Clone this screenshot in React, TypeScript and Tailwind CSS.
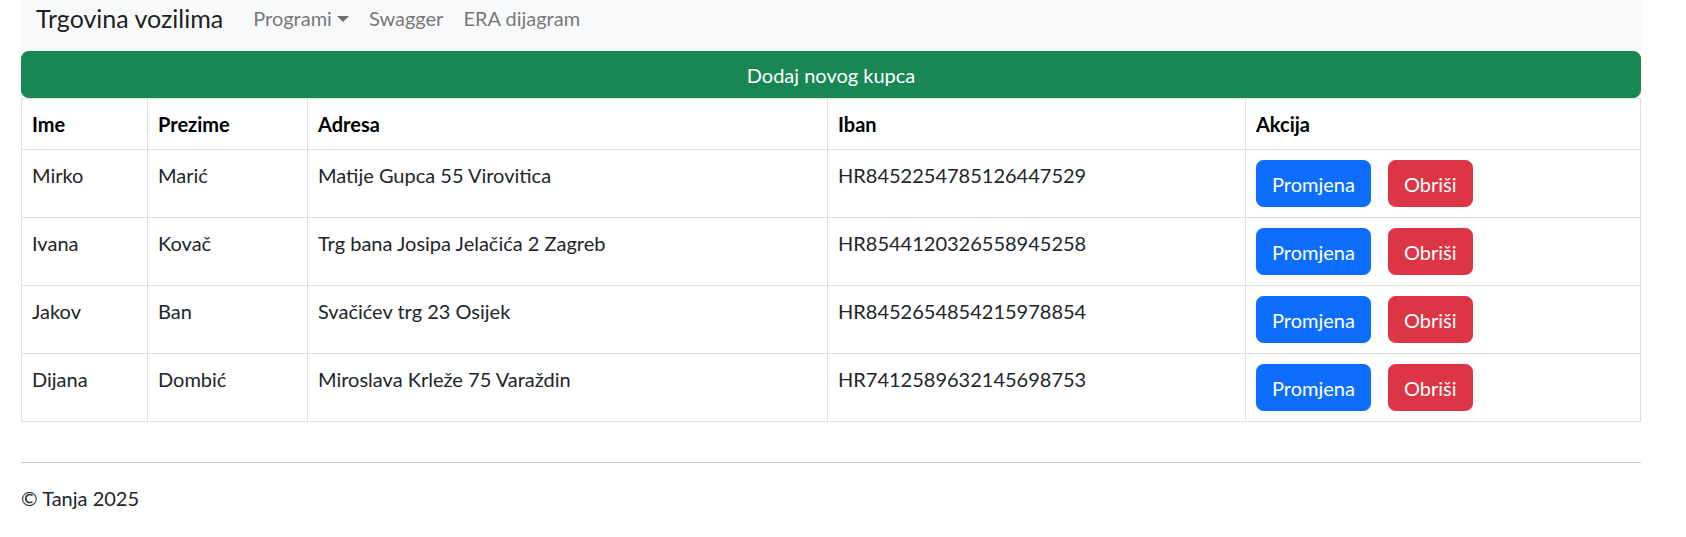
import React from "react";

const rows = [
  { ime: "Mirko", prezime: "Marić", adresa: "Matije Gupca 55 Virovitica", iban: "HR8452254785126447529" },
  { ime: "Ivana", prezime: "Kovač", adresa: "Trg bana Josipa Jelačića 2 Zagreb", iban: "HR8544120326558945258" },
  { ime: "Jakov", prezime: "Ban", adresa: "Svačićev trg 23 Osijek", iban: "HR8452654854215978854" },
  { ime: "Dijana", prezime: "Dombić", adresa: "Miroslava Krleže 75 Varaždin", iban: "HR7412589632145698753" },
];

export default function App() {
  return (
    <div
      className="min-h-[537px] bg-white text-[#212529] text-[20px] leading-[30px]"
      style={{ fontFamily: "Lato, 'Noto Sans', sans-serif" }}
    >
      <div className="ml-[21px] w-[1620px]">
        {/* Navbar */}
        <nav className="flex h-[51px] items-start bg-[#f8f9fa] px-[15px]">
          <span className="mr-[20px] text-[25px] leading-[37px] text-[rgba(0,0,0,0.9)]">Trgovina vozilima</span>
          <a className="flex items-center px-[10px] leading-[37px] text-[rgba(0,0,0,0.55)]">
            Programi
            <span className="ml-[5px] inline-block h-0 w-0 border-x-[6px] border-t-[6px] border-x-transparent border-t-[rgba(0,0,0,0.55)]" />
          </a>
          <a className="px-[10px] leading-[37px] text-[rgba(0,0,0,0.55)]">Swagger</a>
          <a className="px-[10px] leading-[37px] text-[rgba(0,0,0,0.55)]">ERA dijagram</a>
        </nav>

        {/* Add button */}
        <button className="block h-[47px] w-full rounded-[7.5px] border border-[#198754] bg-[#198754] text-center text-[20px] leading-[30px] text-white">
          Dodaj novog kupca
        </button>

        {/* Table */}
        <table className="w-full table-fixed border-collapse border border-[#dee2e6] align-top">
          <colgroup>
            <col className="w-[126px]" />
            <col className="w-[160px]" />
            <col className="w-[520px]" />
            <col className="w-[418px]" />
            <col />
          </colgroup>
          <thead>
            <tr>
              {["Ime", "Prezime", "Adresa", "Iban", "Akcija"].map((h) => (
                <th key={h} className="border border-[#dee2e6] px-[10px] py-[10px] text-left align-top font-bold leading-[30px] text-black">
                  {h}
                </th>
              ))}
            </tr>
          </thead>
          <tbody>
            {rows.map((r) => (
              <tr key={r.iban}>
                <td className="border border-[#dee2e6] px-[10px] py-[10px] align-top leading-[30px]">{r.ime}</td>
                <td className="border border-[#dee2e6] px-[10px] py-[10px] align-top leading-[30px]">{r.prezime}</td>
                <td className="border border-[#dee2e6] px-[10px] py-[10px] align-top leading-[30px]">{r.adresa}</td>
                <td className="border border-[#dee2e6] px-[10px] py-[10px] align-top leading-[30px]">{r.iban}</td>
                <td className="border border-[#dee2e6] px-[10px] py-[10px] align-top">
                  <div className="flex gap-[17px]">
                    <button className="h-[47px] rounded-[7.5px] border border-[#0d6efd] bg-[#0d6efd] px-[15px] text-[20px] leading-[30px] text-white">
                      Promjena
                    </button>
                    <button className="h-[47px] rounded-[7.5px] border border-[#dc3545] bg-[#dc3545] px-[15px] text-[20px] leading-[30px] text-white">
                      Obriši
                    </button>
                  </div>
                </td>
              </tr>
            ))}
          </tbody>
        </table>

        {/* Footer */}
        <hr className="mt-[40px] border-t border-[#c8c9ca]" />
        <footer className="mt-[20px] leading-[30px]">© Tanja 2025</footer>
      </div>
    </div>
  );
}
